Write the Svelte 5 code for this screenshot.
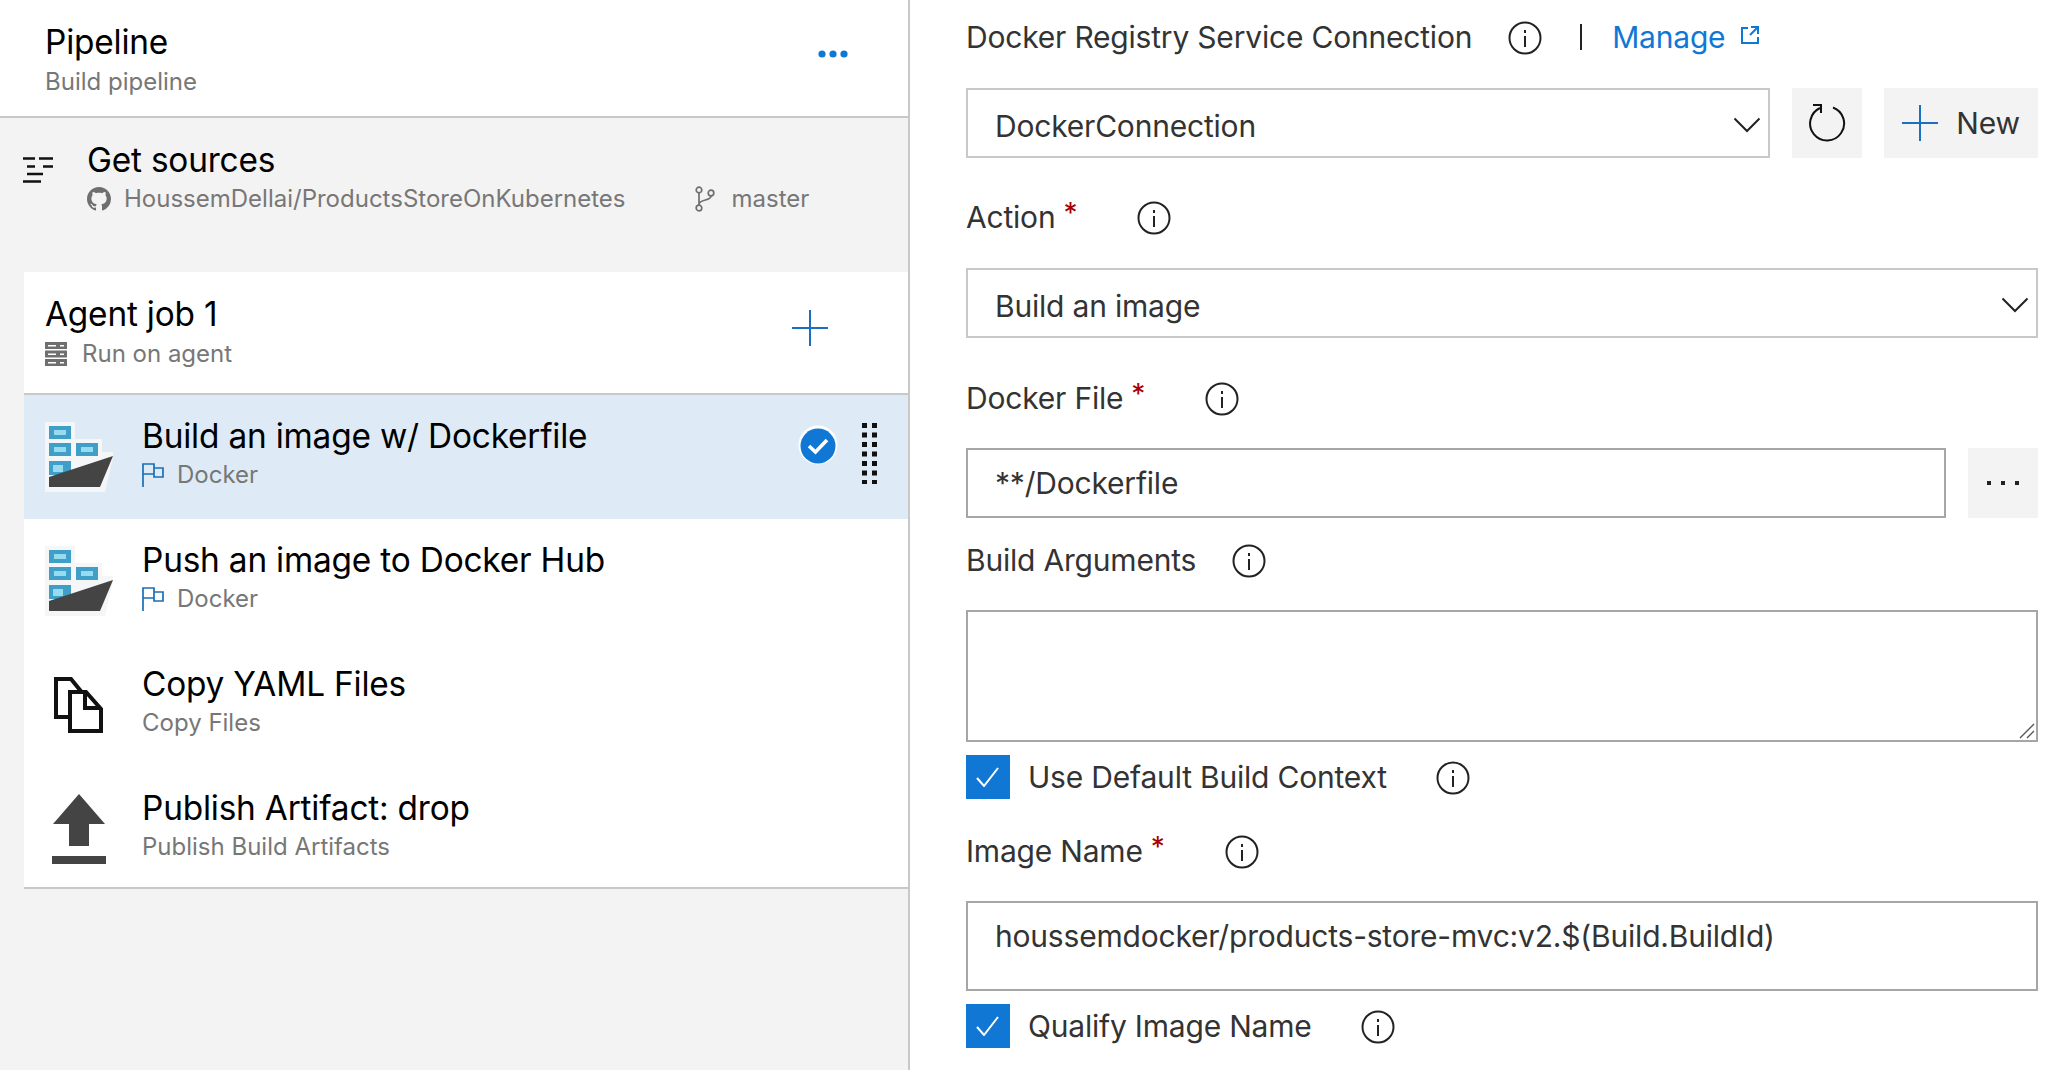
<script>
  const tasks = [
    { title: "Build an image w/ Dockerfile", sub: "Docker", icon: "docker", flag: true, selected: true },
    { title: "Push an image to Docker Hub", sub: "Docker", icon: "docker", flag: true },
    { title: "Copy YAML Files", sub: "Copy Files", icon: "copy" },
    { title: "Publish Artifact: drop", sub: "Publish Build Artifacts", icon: "publish" }
  ];
</script>

{#snippet info()}
  <svg class="info" width="34" height="34" viewBox="0 0 34 34">
    <circle cx="17" cy="17" r="15.5" fill="none" stroke="#222" stroke-width="2" />
    <rect x="16" y="15" width="2" height="11" fill="#222" />
    <rect x="16" y="9" width="2" height="3" fill="#222" />
  </svg>
{/snippet}

{#snippet chevron()}
  <svg class="chevron" width="28" height="16" viewBox="0 0 28 16">
    <path d="M1.5 1.5 L14 14 L26.5 1.5" fill="none" stroke="#222" stroke-width="2" />
  </svg>
{/snippet}

{#snippet plus()}
  <svg width="36" height="36" viewBox="0 0 36 36">
    <path d="M18 0 V36 M0 18 H36" stroke="#1a6fc0" stroke-width="2" fill="none" />
  </svg>
{/snippet}

{#snippet check()}
  <span class="checkbox">
    <svg width="24" height="20" viewBox="0 0 24 20">
      <path d="M1 11 L8 19 L22 1" fill="none" stroke="#fff" stroke-width="2" />
    </svg>
  </span>
{/snippet}

<div class="page">
  <aside class="left">
    <header class="pipeline">
      <div>
        <div class="title">Pipeline</div>
        <div class="sub build">Build pipeline</div>
      </div>
      <svg class="more" width="30" height="8" viewBox="0 0 30 8">
        <circle cx="4" cy="4" r="3.6" fill="#0f78d4" />
        <circle cx="15" cy="4" r="3.6" fill="#0f78d4" />
        <circle cx="26" cy="4" r="3.6" fill="#0f78d4" />
      </svg>
    </header>

    <section class="sources">
      <svg class="sources-icon" width="31" height="26" viewBox="0 0 31 26">
        <path d="M0 1.5 H12 M16 1.5 H30 M4 9.5 H12 M20 9.5 H30 M4 17 H20 M0 24.5 H18" stroke="#111" stroke-width="2.4" fill="none" />
      </svg>
      <div>
        <div class="title">Get sources</div>
        <div class="sub repo">
          <svg width="24" height="24" viewBox="0 0 16 16">
            <path fill="#6f6f6f" d="M8 0C3.58 0 0 3.58 0 8c0 3.54 2.29 6.53 5.47 7.59.4.07.55-.17.55-.38 0-.19-.01-.82-.01-1.49-2.01.37-2.53-.49-2.69-.94-.09-.23-.48-.94-.82-1.13-.28-.15-.68-.52-.01-.53.63-.01 1.08.58 1.23.82.72 1.21 1.87.87 2.33.66.07-.52.28-.87.51-1.07-1.78-.2-3.64-.89-3.64-3.95 0-.87.31-1.59.82-2.15-.08-.2-.36-1.02.08-2.12 0 0 .67-.21 2.2.82.64-.18 1.32-.27 2-.27s1.36.09 2 .27c1.53-1.04 2.2-.82 2.2-.82.44 1.1.16 1.92.08 2.12.51.56.82 1.27.82 2.15 0 3.07-1.87 3.75-3.65 3.95.29.25.54.73.54 1.48 0 1.07-.01 1.93-.01 2.2 0 .21.15.46.55.38A8.01 8.01 0 0 0 16 8c0-4.42-3.58-8-8-8z" />
          </svg>
          <span class="repo-name">HoussemDellai/ProductsStoreOnKubernetes</span>
          <svg class="branch" width="20" height="26" viewBox="0 0 20 26">
            <g fill="none" stroke="#6f6f6f" stroke-width="1.7">
              <circle cx="4" cy="4" r="2.8" />
              <circle cx="4" cy="22" r="2.8" />
              <circle cx="16" cy="7" r="2.8" />
              <path d="M4 7 V19 M16 10 C16 15 5 13 4 18" />
            </g>
          </svg>
          <span>master</span>
        </div>
      </div>
    </section>

    <section class="job-list">
      <div class="job">
        <div>
          <div class="title job-title">Agent job 1</div>
          <div class="sub agent">
            <svg width="22" height="24" viewBox="0 0 22 24">
              <path fill="#6f6f6f" d="M0 0 H22 V7 H0 Z M0 8.5 H22 V15.5 H0 Z M0 17 H22 V24 H0 Z" />
              <path fill="#fff" d="M3 3 H11 V4.5 H3 Z M15 3 H19 V4.5 H15 Z M3 11.5 H11 V13 H3 Z M15 11.5 H19 V13 H15 Z M3 20 H11 V21.5 H3 Z M15 20 H19 V21.5 H15 Z" />
            </svg>
            <span>Run on agent</span>
          </div>
        </div>
        <span class="job-plus">{@render plus()}</span>
      </div>

      {#each tasks as task}
        <div class="task" class:selected={task.selected}>
          <div class="task-icon">
            {#if task.icon === "docker"}
              <svg width="68" height="70" viewBox="0 0 68 70">
                <path fill="#f4f6f8" d="M0 0 H30 V17 H57 V30 H68 V36 L60 70 H0 Z" />
                <g fill="#3f9fc9">
                  <rect x="4" y="4" width="22" height="13" />
                  <rect x="4" y="21" width="22" height="13" />
                  <rect x="31" y="21" width="22" height="13" />
                  <rect x="4" y="39" width="22" height="14" />
                </g>
                <g fill="#97dbee">
                  <rect x="9" y="8" width="12" height="5" />
                  <rect x="9" y="25" width="12" height="5" />
                  <rect x="36" y="25" width="12" height="5" />
                  <rect x="8" y="43" width="10" height="7" />
                </g>
                <path fill="#444" d="M4 55 L68 34 L55 65 H4 Z" />
              </svg>
            {:else if task.icon === "copy"}
              <svg width="50" height="56" viewBox="0 0 50 56">
                <path fill="#fff" stroke="#111" stroke-width="4" stroke-linejoin="miter" d="M2 2 H17 L30 18 V40 H2 Z" />
                <path fill="#fff" stroke="#111" stroke-width="4" d="M16 15 H32 L47 32 V54 H16 Z" />
                <path fill="none" stroke="#111" stroke-width="4" d="M31 15 V31 H47" />
              </svg>
            {:else}
              <svg width="54" height="70" viewBox="0 0 54 70">
                <path fill="#444" d="M27 0 L53 30 H37 V52 H17 V30 H1 Z M0 62 H54 V70 H0 Z" />
              </svg>
            {/if}
          </div>
          <div class="task-text">
            <div class="title">{task.title}</div>
            <div class="sub flagged">
              {#if task.flag}
                <svg width="22" height="24" viewBox="0 0 22 24">
                  <path d="M1 24 V1 H12 V5 H21 V14 H12 V11 H1 M12 5 V11" fill="none" stroke="#1a6fb5" stroke-width="1.7" />
                </svg>
              {/if}
              <span>{task.sub}</span>
            </div>
          </div>
          {#if task.selected}
            <svg class="status" width="40" height="40" viewBox="0 0 40 40">
              <circle cx="20" cy="20" r="19.5" fill="#fff" />
              <circle cx="20" cy="21" r="17.5" fill="#1177d4" />
              <path d="M11 21 L17.5 27 L29 15" fill="none" stroke="#fff" stroke-width="3.6" />
            </svg>
            <svg class="grip" width="15" height="61" viewBox="0 0 15 61">
              {#each [0, 1, 2, 3, 4, 5, 6] as i}
                <rect x="0" y={i * 9.5} width="5" height="5" fill="#111" />
                <rect x="10" y={i * 9.5} width="5" height="5" fill="#111" />
              {/each}
            </svg>
          {/if}
        </div>
      {/each}
    </section>
  </aside>

  <main class="right">
    <div class="label first">
      <span>Docker Registry Service Connection</span>
      <span class="gap-info">{@render info()}</span>
      <span class="divider"></span>
      <span class="manage">Manage</span>
      <svg class="external" width="18" height="18" viewBox="0 0 18 18">
        <path d="M7 2 H1 V17 H17 V11 M10 1 H17 V8 M17 1 L9 9" fill="none" stroke="#0f78d4" stroke-width="2" />
      </svg>
    </div>

    <div class="field-row top">
      <div class="box select grow"><span>DockerConnection</span>{@render chevron()}</div>
      <div class="btn refresh">
        <svg width="38" height="40" viewBox="0 0 38 40">
          <path d="M12 5 A17 17 0 1 0 25 4.5" fill="none" stroke="#111" stroke-width="2" />
          <path d="M5 2 H13 V10" fill="none" stroke="#111" stroke-width="2" />
        </svg>
      </div>
      <div class="btn new">{@render plus()}<span>New</span></div>
    </div>

    <div class="label action"><span>Action</span><span class="req">*</span><span class="gap-info req-gap">{@render info()}</span></div>
    <div class="box select"><span>Build an image</span>{@render chevron()}</div>

    <div class="label file"><span>Docker File</span><span class="req">*</span><span class="gap-info req-gap">{@render info()}</span></div>
    <div class="field-row">
      <div class="box grow"><span>**/Dockerfile</span></div>
      <div class="btn dots">
        <svg width="32" height="4" viewBox="0 0 32 4">
          <rect x="0" width="4" height="4" fill="#222" />
          <rect x="14" width="4" height="4" fill="#222" />
          <rect x="28" width="4" height="4" fill="#222" />
        </svg>
      </div>
    </div>

    <div class="label args"><span>Build Arguments</span><span class="gap-info">{@render info()}</span></div>
    <div class="area">
      <svg class="resize" width="16" height="16" viewBox="0 0 16 16">
        <path d="M1 15 L15 1 M8 15 L15 8" stroke="#555" stroke-width="1.4" fill="none" />
      </svg>
    </div>

    <div class="check-row context">
      {@render check()}
      <span>Use Default Build Context</span>
      <span class="gap-info">{@render info()}</span>
    </div>

    <div class="label image"><span>Image Name</span><span class="req">*</span><span class="gap-info req-gap">{@render info()}</span></div>
    <div class="box image-box"><span>houssemdocker/products-store-mvc:v2.$(Build.BuildId)</span></div>

    <div class="check-row qualify">
      {@render check()}
      <span>Qualify Image Name</span>
      <span class="gap-info">{@render info()}</span>
    </div>
  </main>
</div>

<style>
  :global(body) {
    margin: 0;
    background: #fff;
  }

  .page {
    display: flex;
    width: 2064px;
    height: 1070px;
    overflow: hidden;
    font-family: Inter, "Noto Sans", sans-serif;
    color: #333;
  }

  .left {
    width: 908px;
    flex: none;
    box-sizing: content-box;
    background: #f3f3f3;
    border-right: 2px solid #c8c8c8;
  }

  .title {
    font-size: 33.4px;
    line-height: 40px;
    color: #000;
    letter-spacing: -0.2px;
  }

  .sub {
    font-size: 24px;
    line-height: 32px;
    color: #777;
  }

  .pipeline {
    height: 116px;
    box-sizing: content-box;
    background: #fff;
    border-bottom: 2px solid #c8c8c8;
    display: flex;
    justify-content: space-between;
    align-items: center;
    padding: 0 60px 0 45px;
  }

  .build {
    margin-top: 4px;
    margin-bottom: -4px;
  }

  .more {
    margin-top: -8px;
  }

  .sources {
    height: 154px;
    display: flex;
    padding-left: 23px;
    padding-top: 22px;
    box-sizing: border-box;
    gap: 33px;
  }

  .sources-icon {
    margin-top: 17px;
    flex: none;
  }

  .repo {
    display: flex;
    align-items: center;
    margin-top: 3px;
  }

  .repo-name {
    margin-left: 13px;
  }

  .branch {
    margin-left: 69px;
    margin-right: 17px;
  }

  .job-list {
    margin-left: 24px;
    background: #fff;
    border-bottom: 2px solid #c8c8c8;
  }

  .job {
    height: 121px;
    box-sizing: content-box;
    border-bottom: 2px solid #c8c8c8;
    display: flex;
    justify-content: space-between;
    align-items: center;
    padding: 0 80px 0 21px;
  }

  .job-title {
    margin-top: -2px;
  }

  .job-plus {
    margin-top: -10px;
    line-height: 0;
  }

  .agent {
    display: flex;
    align-items: center;
    gap: 15px;
    margin-top: 4px;
  }

  .task {
    height: 124px;
    display: flex;
    align-items: center;
    position: relative;
  }

  .task:last-child {
    margin-bottom: -4px;
  }

  .selected {
    background: #deebf6;
  }

  .task-icon {
    width: 110px;
    flex: none;
    display: flex;
    justify-content: center;
    margin-right: 8px;
  }

  .task-text {
    flex: 1;
    margin-top: -7px;
  }

  .flagged {
    display: flex;
    align-items: center;
    gap: 13px;
    margin-top: 3.5px;
  }

  .status {
    position: absolute;
    left: 774px;
    top: 30px;
  }

  .grip {
    position: absolute;
    left: 838px;
    top: 28px;
  }

  .right {
    flex: 1;
    padding: 0 26px 0 56px;
    font-size: 30px;
  }

  .label,
  .check-row {
    display: flex;
    align-items: center;
    font-size: 30px;
    height: 40px;
    color: #333;
    letter-spacing: -0.2px;
  }

  .first {
    margin-top: 17px;
  }

  .gap-info {
    display: flex;
    margin-left: 36px;
    margin-top: 2px;
  }

  .req-gap {
    margin-left: 61px;
  }

  .req {
    color: #a80000;
    margin-left: 8px;
    margin-right: -1px;
    font-size: 28px;
    align-self: flex-start;
    margin-top: 2px;
    line-height: 28px;
  }

  .divider {
    width: 2px;
    height: 26px;
    background: #222;
    margin-left: 38px;
  }

  .manage {
    color: #0f78d4;
    margin-left: 30px;
  }

  .external {
    margin-left: 16px;
    margin-top: -4px;
  }

  .field-row {
    display: flex;
    gap: 22px;
  }

  .top {
    margin-top: 31px;
  }

  .grow {
    flex: 1;
  }

  .box {
    height: 70px;
    box-sizing: border-box;
    border: 2px solid #c8c8c8;
    display: flex;
    align-items: center;
    padding: 0 4px 0 27px;
    font-size: 30px;
    color: #333;
    background: #fff;
    letter-spacing: -0.2px;
  }

  .select {
    justify-content: space-between;
    padding-top: 5px;
    padding-right: 7px;
  }

  .chevron {
    margin-top: -1px;
  }

  .btn {
    height: 70px;
    background: #f3f3f3;
    display: flex;
    align-items: center;
    justify-content: center;
    flex: none;
  }

  .refresh {
    width: 70px;
  }

  .new {
    width: 154px;
    gap: 18px;
    color: #333;
    letter-spacing: -0.2px;
  }

  .dots {
    width: 70px;
  }

  .action {
    margin-top: 39px;
  }

  .action + .box {
    margin-top: 31px;
  }

  .file {
    margin-top: 40px;
    margin-bottom: 30px;
  }

  .file + .field-row .box {
    border-color: #a6a6a6;
  }

  .args {
    margin-top: 22px;
  }

  .area {
    margin-top: 30px;
    height: 132px;
    box-sizing: border-box;
    border: 2px solid #a6a6a6;
    position: relative;
  }

  .resize {
    position: absolute;
    right: 1px;
    bottom: 1px;
  }

  .check-row {
    height: 44px;
    gap: 18px;
  }

  .check-row .gap-info {
    margin-left: 31px;
  }

  .context {
    margin-top: 13px;
  }

  .checkbox {
    width: 44px;
    height: 44px;
    background: #1177d4;
    display: flex;
    align-items: center;
    justify-content: center;
    flex: none;
    line-height: 0;
  }

  .image {
    margin-top: 32px;
    margin-bottom: 30px;
  }

  .image-box {
    height: 90px;
    border-color: #a6a6a6;
    align-items: flex-start;
    padding-top: 15px;
  }

  .qualify {
    margin-top: 13px;
  }
</style>
